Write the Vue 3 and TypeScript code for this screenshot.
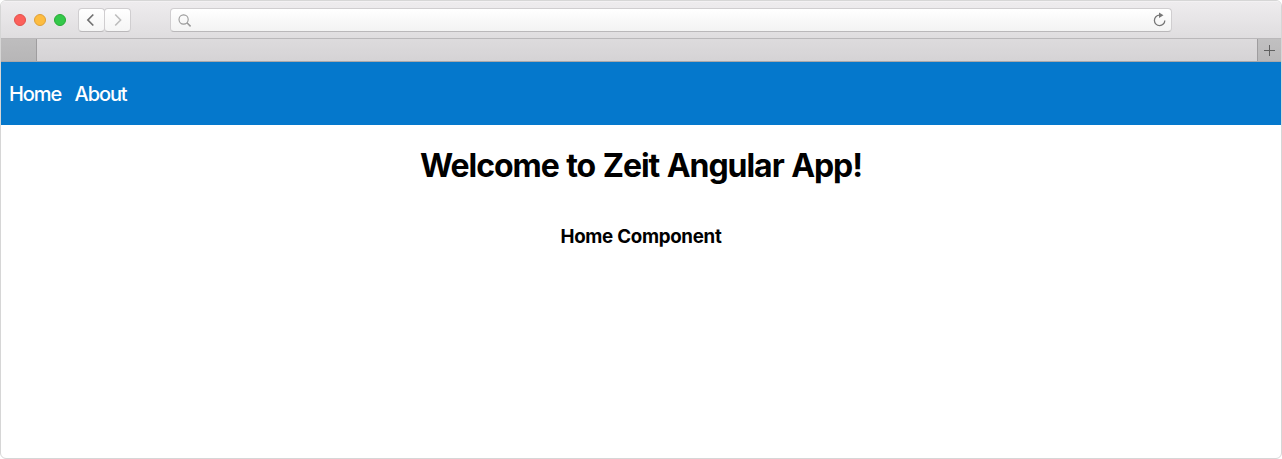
<script setup lang="ts">
interface NavLink {
  label: string
  id: string
}

const lights: string[] = ['close', 'minimize', 'expand']
const links: NavLink[] = [
  { label: 'Home', id: 'home' },
  { label: 'About', id: 'about' },
]
</script>

<template>
  <div class="window">
    <header class="toolbar">
      <div class="lights">
        <span v-for="light in lights" :key="light" class="light" :class="light"></span>
      </div>
      <div class="history">
        <button class="history-button" aria-label="Back">
          <svg width="24" height="22" viewBox="0 0 24 22"><path d="M14.3 5.5 8.9 11l5.4 5.5" fill="none" stroke="#707070" stroke-width="1.7" /></svg>
        </button>
        <button class="history-button" aria-label="Forward">
          <svg width="24" height="22" viewBox="0 0 24 22"><path d="M10.2 5.5 15.6 11l-5.4 5.5" fill="none" stroke="#bdbdbd" stroke-width="1.6" /></svg>
        </button>
      </div>
      <div class="address">
        <svg class="search" width="14" height="14" viewBox="0 0 14 14" fill="none" stroke="#999">
          <circle cx="5.6" cy="5.5" r="4.6" stroke-width="1.1" />
          <path d="m8.9 8.8 3.7 3.6" stroke-width="1.5" />
        </svg>
        <svg class="reload" width="14" height="16" viewBox="0 0 14 16">
          <path d="M6.5 3.2A5.2 5.2 0 1 0 11.8 8.4" fill="none" stroke="#777" stroke-width="1.3" />
          <path d="M6 .6 10.5 3.2 6 5.9Z" fill="#777" />
        </svg>
      </div>
    </header>
    <div class="tabs">
      <div class="tab-pinned"></div>
      <button class="tab-add" aria-label="New tab">
        <svg width="23" height="22" viewBox="0 0 23 22"><path d="M6 11.5h11M11.5 6v11" stroke="#606060" stroke-width="1" /></svg>
      </button>
    </div>
    <nav class="nav">
      <a v-for="link in links" :key="link.id" class="nav-link">{{ link.label }}</a>
    </nav>
    <main class="page">
      <h1>Welcome to Zeit Angular App!</h1>
      <h3>Home Component</h3>
    </main>
  </div>
</template>

<style>
body {
  background: #fff;
}
</style>

<style scoped>
.window {
  box-sizing: border-box;
  width: 1282px;
  height: 459px;
  border: 1px solid #d6d6d6;
  border-radius: 6px;
  overflow: hidden;
  background: #fff;
  font-family: Inter, "Liberation Sans", sans-serif;
}

.toolbar {
  box-sizing: border-box;
  height: 38px;
  display: flex;
  align-items: flex-start;
  padding: 6px 0 0 13px;
  background: linear-gradient(#eeecee, #dfdddf);
  border-top: 1px solid #f3f1f3;
  border-bottom: 1px solid #bab8ba;
}

.lights {
  display: flex;
  gap: 8px;
  padding-top: 6px;
}

.light {
  box-sizing: border-box;
  width: 12px;
  height: 12px;
  border-radius: 50%;
  border: 1px solid;
}

.close {
  background: #fc605b;
  border-color: #e2504b;
}

.minimize {
  background: #fdbc40;
  border-color: #dfa036;
}

.expand {
  background: #34c84a;
  border-color: #27ab35;
}

.history {
  display: flex;
  margin-left: 12px;
}

button {
  margin: 0;
  padding: 0;
  border: 0;
}

svg {
  display: block;
}

.history-button {
  box-sizing: border-box;
  width: 27px;
  height: 24px;
  border: 1px solid #d0ced0;
  border-bottom-color: #bab8ba;
  border-radius: 4px;
  background: linear-gradient(#fff, #f5f5f5);
}

.history-button + .history-button {
  margin-left: -1px;
}

.address {
  box-sizing: border-box;
  width: 1002px;
  height: 24px;
  margin-left: 39px;
  padding: 0 4px 0 7px;
  display: flex;
  align-items: center;
  justify-content: space-between;
  border: 1px solid #d0ced0;
  border-bottom-color: #bab8ba;
  border-radius: 4px;
  background: linear-gradient(#fff, #f3f3f3);
}

.search {
  margin-top: 2px;
}

.tabs {
  box-sizing: border-box;
  height: 23px;
  display: flex;
  justify-content: space-between;
  background: linear-gradient(#dddbdd, #d5d3d5);
  border-bottom: 1px solid #aaa8aa;
}

.tab-pinned {
  width: 35px;
  background: linear-gradient(#bebdbe, #b7b6b7);
  border-right: 1px solid #9f9d9f;
}

.tab-add {
  width: 24px;
  background: linear-gradient(#c1c0c1, #b9b8b9);
  border-left: 1px solid #9f9d9f;
}

.nav {
  box-sizing: border-box;
  height: 63px;
  display: flex;
  gap: 13.5px;
  padding: 20px 8px 0;
  background: #0578cc;
}

.nav-link {
  color: #fff;
  font-size: 20px;
  line-height: 24px;
  font-weight: 500;
  letter-spacing: -1.1px;
}

.page {
  text-align: center;
  color: #000;
}

h1 {
  margin: 22px 0 0;
  font-size: 32px;
  line-height: 38px;
  font-weight: 700;
  letter-spacing: -1.05px;
  word-spacing: 1px;
}

h3 {
  margin: 41px 0 0;
  font-size: 18.72px;
  line-height: 22px;
  font-weight: 700;
  letter-spacing: -0.28px;
}
</style>
